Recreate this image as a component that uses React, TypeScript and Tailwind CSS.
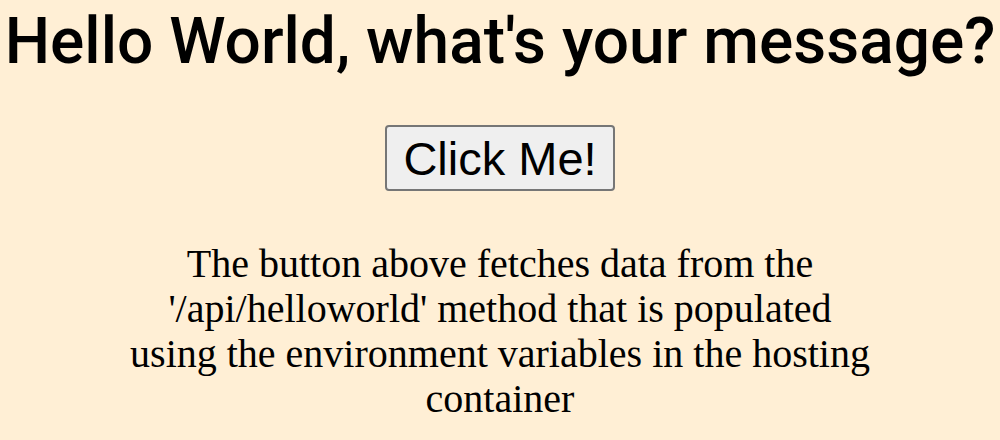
export default function App() {
  return (
    <div className="min-h-screen h-[440px] bg-[#ffefd5] flex flex-col items-center overflow-hidden">
      <h1 className="mt-[2px] text-[64px] leading-[80px] font-medium text-black font-['Roboto',sans-serif] whitespace-nowrap">
        Hello World, what's your message?
      </h1>
      <button className="mt-[43px] h-[66px] px-[16px] bg-[#efefef] border-2 border-[#767676] rounded-[4px] text-[47px] leading-none text-black font-['Liberation_Sans',Arial,sans-serif]">
        Click Me!
      </button>
      <p className="mt-[50px] w-[750px] text-center text-[40px] leading-[45px] text-black font-['Liberation_Serif','Times_New_Roman',serif]">
        The button above fetches data from the '/api/helloworld' method that is populated using the environment variables in the hosting container
      </p>
    </div>
  );
}
